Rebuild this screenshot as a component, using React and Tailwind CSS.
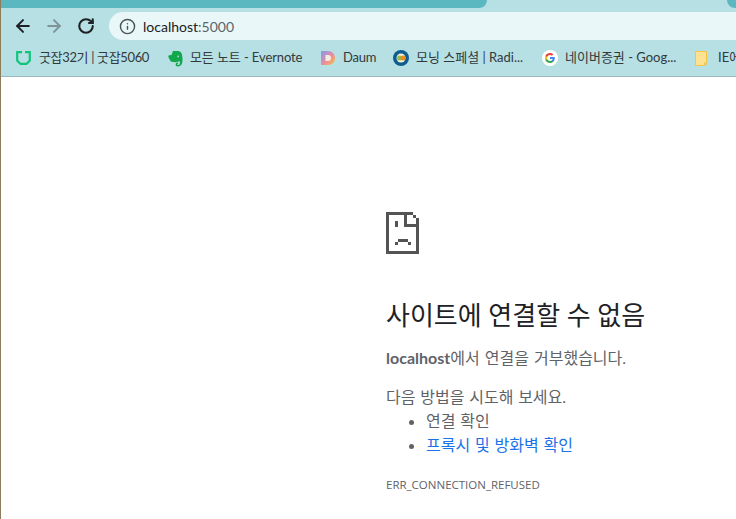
import { ArrowLeft, ArrowRight, RotateCw, Info } from "lucide-react";

const uiFont = "font-['Lato','Noto_Sans_CJK_KR',sans-serif]";

const GoodjobIcon = () => (
  <svg viewBox="0 0 15 14" className="h-[14px] w-[15px]">
    <path d="M6 1.200H1.200v8.300L4.500 12.900h6l3.300-3.400V1.200H9" fill="none" stroke="#10c47a" strokeWidth="2.200" />
  </svg>
);

const EvernoteIcon = () => (
  <svg viewBox="0 0 16 16" className="h-[17px] w-[17px]">
    <path d="M1 5.500l3.500-1L5.500 1H10c2.500 0 4 1.500 4.200 4 .6 3 .6 6-.2 8-.8 2-2.500 2.500-4 2.500-2 0-2.500-2-1-3.500.6-.5 1.500 0 1.500 1-1-.2-1.500 1 0 1.200 1.500 0 2-1.500 1.500-3.500C9 11.800 6.500 11.500 4 11 2.500 10 2 8 1 5.500z" fill="#10a84a" />
    <circle cx="10.500" cy="6" r=".8" fill="#b6e0e4" />
  </svg>
);

const DaumIcon = () => (
  <svg viewBox="0 0 16 16" className="h-4 w-4">
    <defs>
      <linearGradient id="daum" x1="0" y1="0" x2="1" y2="1">
        <stop offset="0" stopColor="#7b9df0" />
        <stop offset="0.55" stopColor="#f08aa0" />
        <stop offset="1" stopColor="#f7c62e" />
      </linearGradient>
    </defs>
    <path d="M1 1h7c4 0 7 3 7 7s-3 7-7 7H1z" fill="url(#daum)" />
    <path d="M5.500 5H8c2 0 3 1.300 3 3s-1 3-3 3H5.500z" fill="#f4eee0" />
  </svg>
);

const RadioIcon = () => (
  <svg viewBox="0 0 16 16" className="h-4 w-4">
    <circle cx="8" cy="8" r="8" fill="#0f5c8f" />
    <circle cx="8" cy="8" r="4.500" fill="#f5f0d8" />
    <circle cx="6.500" cy="8" r="2.500" fill="#8fc04a" />
    <circle cx="10" cy="8" r="2.500" fill="#ee8a1d" />
  </svg>
);

const GoogleIcon = () => (
  <svg viewBox="0 0 16 16" className="h-4 w-4 overflow-visible">
    <circle cx="8" cy="8" r="8" fill="#fff" />
    <path d="M12.800 8.100c0-.4 0-.7-.1-1H8v1.900h2.700c-.1.600-.5 1.200-1 1.500v1.300h1.600c1-.9 1.500-2.200 1.500-3.700z" fill="#4285f4" />
    <path d="M8 13c1.300 0 2.400-.4 3.300-1.200l-1.600-1.300c-.4.300-1 .5-1.700.5-1.300 0-2.400-.9-2.800-2H3.500v1.300C4.300 12 6 13 8 13z" fill="#34a853" />
    <path d="M5.200 9c-.2-.6-.2-1.300 0-1.900V5.800H3.500c-.7 1.400-.7 3 0 4.400z" fill="#fbbc05" />
    <path d="M8 5c.7 0 1.400.3 1.900.7l1.400-1.400C10.400 3.500 9.300 3 8 3 6 3 4.300 4 3.500 5.800l1.700 1.300C5.600 5.900 6.700 5 8 5z" fill="#ea4335" />
  </svg>
);

const NoteIcon = () => (
  <svg viewBox="0 0 12 15" className="h-[15px] w-3">
    <path d="M.5.500h11v11l-3 3h-8z" fill="#fde293" stroke="#f4c542" />
    <path d="M9 11.500h2.500v3H9z" fill="#f4c542" />
  </svg>
);

const bookmarks = [
  { id: 1, width: "w-[151px]", text: "tracking-[-0.35px]", title: "굿잡32기 | 굿잡5060", icon: <GoodjobIcon /> },
  { id: 2, width: "w-[153px]", text: "tracking-[-0.1px]", title: "모든 노트 - Evernote", icon: <EvernoteIcon /> },
  { id: 3, width: "w-[73px]", text: "tracking-[-0.2px]", title: "Daum", icon: <DaumIcon /> },
  { id: 4, width: "w-[149px]", text: "", title: "모닝 스페셜 | Radi...", icon: <RadioIcon /> },
  { id: 5, width: "w-[153px]", text: "", title: "네이버증권 - Goog...", icon: <GoogleIcon /> },
  { id: 6, width: "w-[41px]", text: "", title: "IE에", icon: <NoteIcon /> },
];

const SadPage = () => (
  <svg viewBox="0 0 33 42" className="h-[42px] w-[33px]" fill="#545454">
    <rect x="0" y="0" width="3" height="42" />
    <rect x="0" y="0" width="27" height="3" />
    <rect x="27" y="3" width="3" height="3" />
    <rect x="30" y="6" width="3" height="36" />
    <rect x="0" y="39" width="33" height="3" />
    <rect x="18" y="0" width="3" height="15" />
    <rect x="18" y="12" width="15" height="3" />
    <rect x="9" y="9" width="3" height="6" />
    <rect x="12" y="27" width="10" height="3" />
    <rect x="9" y="30" width="3" height="3" />
    <rect x="22" y="30" width="3" height="3" />
  </svg>
);

export default function App() {
  return (
    <div className={`h-[519px] w-[736px] overflow-hidden border-l border-l-[#8c7c5c] bg-white ${uiFont}`}>
      <div className="flex h-2 justify-between bg-[#b6e0e4]">
        <div className="w-[486px] rounded-br-lg bg-[#5bb8c1]" />
        <div className="w-[9px] rounded-bl-lg bg-[#5bb8c1]" />
      </div>

      <div className="flex h-[32px] items-end bg-[#b6e0e4]">
        <div className="flex h-7 w-[108px] items-center text-[#202124]">
          <ArrowLeft className="ml-[12px] h-[20px] w-[20px]" strokeWidth={2.4} />
          <ArrowRight className="ml-[11px] h-[20px] w-[20px] text-[#7f9498]" strokeWidth={2.4} />
          <RotateCw className="ml-[13px] h-[18px] w-[18px]" strokeWidth={2.8} />
        </div>
        <div className="flex h-7 flex-1 items-center rounded-l-full bg-[#eaf7f8] pl-[10px]">
          <Info className="h-[17px] w-[17px] text-[#4b5356]" strokeWidth={2} />
          <span className="ml-[7px] text-[14px] text-[#202124]">
            localhost<span className="text-[#5a6468]">:5000</span>
          </span>
        </div>
      </div>

      <div className="flex h-[37px] items-center whitespace-nowrap border-b border-b-[#9cbabd] bg-[#b6e0e4] pl-[15px] text-[13px] text-[#33393b]">
        {bookmarks.map((item) => (
          <div key={item.id} className={`flex shrink-0 items-center ${item.width}`}>
            <span className="flex w-[23px] shrink-0 items-center">{item.icon}</span>
            <span className={item.text}>{item.title}</span>
          </div>
        ))}
      </div>

      <main className="pl-[385px] pt-[135px]">
        <SadPage />
        <h1 className="mt-[44px] text-[26px] leading-[34px] text-[#202124]">사이트에 연결할 수 없음</h1>
        <p className="mt-[14px] text-[16px] leading-[24px] text-[#5f6368] [word-spacing:1px]">
          <strong className="font-bold">localhost</strong>에서 연결을 거부했습니다.
        </p>
        <p className="mt-[15px] text-[16px] leading-[24px] text-[#5f6368] [word-spacing:0.7px]">다음 방법을 시도해 보세요.</p>
        <ul className="list-disc pl-[40px] text-[16px] leading-[24px] text-[#5f6368] [word-spacing:0.7px]">
          <li>연결 확인</li>
          <li>
            <span className="text-[#1a73e8]">프록시 및 방화벽 확인</span>
          </li>
        </ul>
        <p className="mt-[19px] font-['Open_Sans',sans-serif] text-[11.5px] leading-[18px] text-[#5f6368]">ERR_CONNECTION_REFUSED</p>
      </main>
    </div>
  );
}
